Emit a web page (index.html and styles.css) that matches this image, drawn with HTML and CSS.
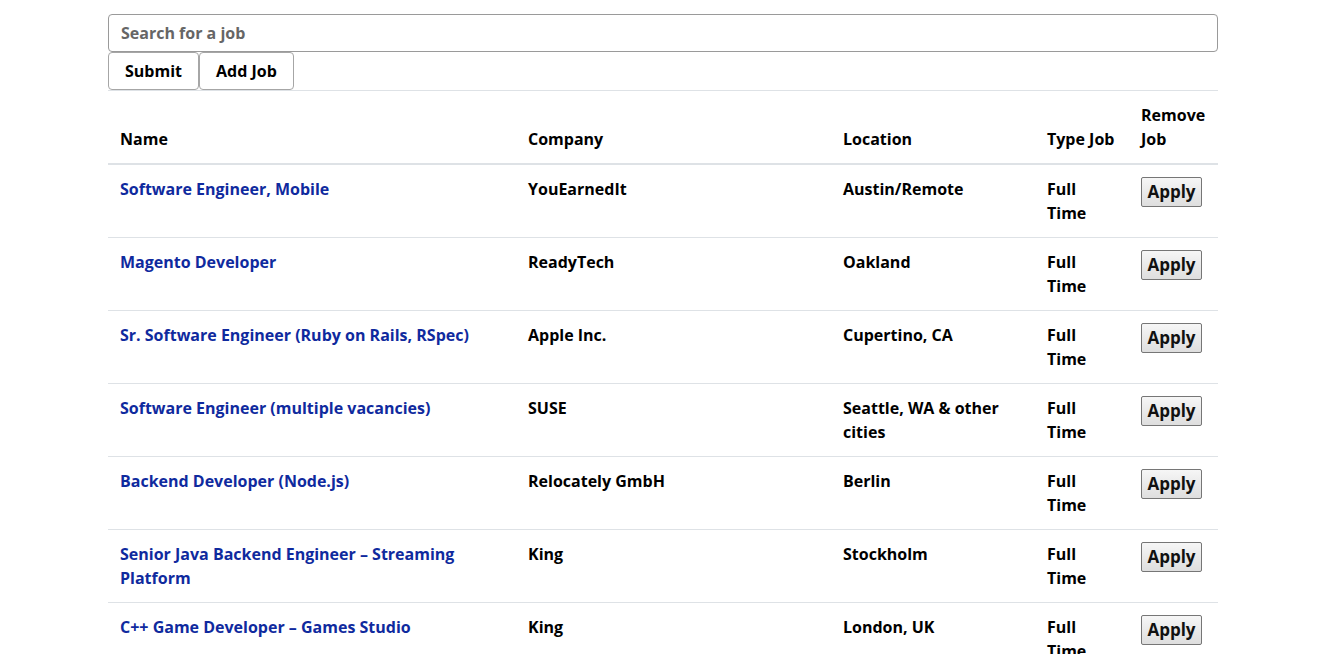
FILE: index.html
```html
<!DOCTYPE html>
<html>
<head>
<meta charset="utf-8">
<link rel="stylesheet" href="styles.css">
</head>
<body>
<div class="container">
  <input class="search" type="text" placeholder="Search for a job">
  <div class="actions">
    <button class="btn">Submit</button><button class="btn">Add Job</button>
  </div>
  <table class="jobs">
    <colgroup>
      <col class="c-name"><col class="c-company"><col class="c-loc"><col class="c-type"><col class="c-rm">
    </colgroup>
    <thead>
      <tr><th>Name</th><th>Company</th><th>Location</th><th>Type Job</th><th>Remove Job</th></tr>
    </thead>
    <tbody>
      <tr><td><a href="#">Software Engineer, Mobile</a></td><td>YouEarnedIt</td><td>Austin/Remote</td><td>Full Time</td><td><button class="apply">Apply</button></td></tr>
      <tr><td><a href="#">Magento Developer</a></td><td>ReadyTech</td><td>Oakland</td><td>Full Time</td><td><button class="apply">Apply</button></td></tr>
      <tr><td><a href="#">Sr. Software Engineer (Ruby on Rails, RSpec)</a></td><td>Apple Inc.</td><td>Cupertino, CA</td><td>Full Time</td><td><button class="apply">Apply</button></td></tr>
      <tr><td><a href="#">Software Engineer (multiple vacancies)</a></td><td>SUSE</td><td>Seattle, WA &amp; other cities</td><td>Full Time</td><td><button class="apply">Apply</button></td></tr>
      <tr><td><a href="#">Backend Developer (Node.js)</a></td><td>Relocately GmbH</td><td>Berlin</td><td>Full Time</td><td><button class="apply">Apply</button></td></tr>
      <tr><td><a href="#">Senior Java Backend Engineer – Streaming Platform</a></td><td>King</td><td>Stockholm</td><td>Full Time</td><td><button class="apply">Apply</button></td></tr>
      <tr><td><a href="#">C++ Game Developer – Games Studio</a></td><td>King</td><td>London, UK</td><td>Full Time</td><td><button class="apply">Apply</button></td></tr>
    </tbody>
  </table>
</div>
</body>
</html>
```
FILE: styles.css
```css
html, body {
  margin: 0;
  padding: 0;
  background: #fff;
}
body {
  font-family: "Open Sans", "Liberation Sans", sans-serif;
  font-size: 16px;
  font-weight: 700;
  line-height: 1.5;
  color: #000;
}
.container {
  width: 1110px;
  margin: 14px 0 0 108px;
}
.search {
  display: block;
  box-sizing: border-box;
  width: 100%;
  height: 38px;
  padding: 6px 12px;
  border: 1px solid #9a9a9a;
  border-radius: 4px;
  font: inherit;
  color: #333;
  outline: none;
}
.search::placeholder {
  color: #666;
}
.actions {
  display: flex;
}
.btn {
  box-sizing: border-box;
  height: 38px;
  padding: 6px 16px;
  border: 1px solid #a6a6a6;
  border-radius: 4px;
  background: #fff;
  font: inherit;
  color: #000;
}
.jobs {
  width: 100%;
  border-collapse: collapse;
  table-layout: fixed;
}
.c-name { width: 408px; }
.c-company { width: 315px; }
.c-loc { width: 204px; }
.c-type { width: 94px; }
.c-rm { width: 89px; }
.jobs th, .jobs td {
  padding: 12px;
  text-align: left;
  vertical-align: top;
  border-top: 1px solid #dee2e6;
  font-weight: 700;
}
.jobs th {
  vertical-align: bottom;
  border-bottom: 2px solid #dee2e6;
}
.jobs a {
  color: #0f2a9e;
  text-decoration: none;
}
.apply {
  box-sizing: border-box;
  width: 61px;
  height: 30px;
  padding: 0;
  border: 1px solid #767676;
  border-radius: 2px;
  background: linear-gradient(#f6f6f6, #dedede);
  font-family: "Open Sans", "Liberation Sans", sans-serif;
  font-size: 17px;
  font-weight: 700;
  line-height: 26px;
  color: #111;
}
```
